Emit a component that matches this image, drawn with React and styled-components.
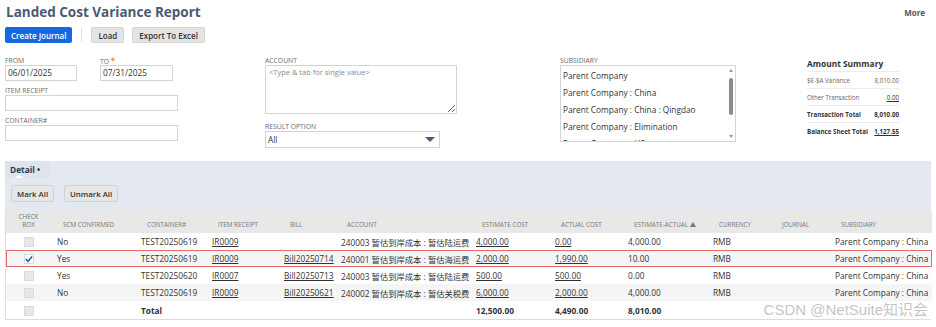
import styled, { createGlobalStyle } from "styled-components";

const GlobalStyle = createGlobalStyle`
  html, body {
    margin: 0;
    padding: 0;
    background: #fff;
  }
  body {
    font-family: "Open Sans", "Noto Sans CJK SC", sans-serif;
    color: #333;
  }
`;

const rows = [
  { checked: false, scm: "No", container: "TEST20250619", receipt: "IR0009", bill: "", account: "240003 暂估到岸成本 : 暂估陆运费", est: "4,000.00", act: "0.00", diff: "4,000.00" },
  { checked: true, scm: "Yes", container: "TEST20250619", receipt: "IR0009", bill: "Bill20250714", account: "240001 暂估到岸成本 : 暂估海运费", est: "2,000.00", act: "1,990.00", diff: "10.00" },
  { checked: false, scm: "Yes", container: "TEST20250620", receipt: "IR0007", bill: "Bill20250713", account: "240003 暂估到岸成本 : 暂估陆运费", est: "500.00", act: "500.00", diff: "0.00" },
  { checked: false, scm: "No", container: "TEST20250619", receipt: "IR0009", bill: "Bill20250621", account: "240002 暂估到岸成本 : 暂估关税费", est: "6,000.00", act: "2,000.00", diff: "4,000.00" },
];

const columns = [
  { label: "CHECK BOX", width: 45 },
  { label: "SCM CONFIRMED", width: 84 },
  { label: "CONTAINER#", width: 71 },
  { label: "ITEM RECEIPT", width: 72 },
  { label: "BILL", width: 57 },
  { label: "ACCOUNT", width: 135 },
  { label: "ESTIMATE COST", width: 79 },
  { label: "ACTUAL COST", width: 73 },
  { label: "ESTIMATE-ACTUAL ▲", width: 85 },
  { label: "CURRENCY", width: 63 },
  { label: "JOURNAL", width: 59 },
  { label: "SUBSIDIARY", width: 103 },
];

const subsidiaries = [
  "Parent Company",
  "Parent Company : China",
  "Parent Company : China : Qingdao",
  "Parent Company : Elimination",
  "Parent Company : US",
];

const Check = () => (
  <svg width="9" height="8" viewBox="0 0 9 8">
    <path d="M1 4.2 L3.4 6.6 L8 1.2" fill="none" stroke="#2660b8" strokeWidth="1.8" />
  </svg>
);

const App = () => {
  return (
    <>
      <GlobalStyle />
      <Page>
        <TitleBar>
          <Title>Landed Cost Variance Report</Title>
          <More>More</More>
        </TitleBar>
        <ButtonBar>
          <PrimaryButton>Create Journal</PrimaryButton>
          <Divider />
          <GreyButton>Load</GreyButton>
          <GreyButton>Export To Excel</GreyButton>
        </ButtonBar>

        <FormGrid>
          <FieldColumn>
            <DateRow>
              <Field>
                <Label>FROM</Label>
                <Input width={72}>06/01/2025</Input>
              </Field>
              <Field>
                <Label>
                  TO <Star>*</Star>
                </Label>
                <Input width={73}>07/31/2025</Input>
              </Field>
            </DateRow>
            <Field>
              <Label>ITEM RECEIPT</Label>
              <Input width={173} />
            </Field>
            <Field>
              <Label>CONTAINER#</Label>
              <Input width={173} />
            </Field>
          </FieldColumn>

          <FieldColumn>
            <Field>
              <Label>ACCOUNT</Label>
              <TextArea readOnly placeholder="<Type & tab for single value>" />
            </Field>
            <Field $top={3}>
              <Label>RESULT OPTION</Label>
              <Select>
                All
                <Caret />
              </Select>
            </Field>
          </FieldColumn>

          <FieldColumn>
            <Field>
              <Label>SUBSIDIARY</Label>
              <ListBox>
                <ListItems>
                  {subsidiaries.map((s) => (
                    <ListItem key={s}>{s}</ListItem>
                  ))}
                </ListItems>
                <ScrollTrack>
                  <ArrowUp />
                  <Thumb />
                  <ArrowDown />
                </ScrollTrack>
              </ListBox>
            </Field>
          </FieldColumn>

          <Summary>
            <SummaryTitle>Amount Summary</SummaryTitle>
            <SummaryRow>
              <span>$E-$A Variance</span>
              <span>8,010.00</span>
            </SummaryRow>
            <SummaryRow>
              <span>Other Transaction</span>
              <LinkValue>0.00</LinkValue>
            </SummaryRow>
            <SummaryRow $bold>
              <span>Transaction Total</span>
              <span>8,010.00</span>
            </SummaryRow>
            <SummaryRow $bold>
              <span>Balance Sheet Total</span>
              <LinkValue>1,127.55</LinkValue>
            </SummaryRow>
          </Summary>
        </FormGrid>

        <DetailSection>
          <TabStrip>
            <Tab>Detail •</Tab>
          </TabStrip>
          <DetailButtons>
            <SmallButton>Mark All</SmallButton>
            <SmallButton>Unmark All</SmallButton>
          </DetailButtons>
          <TableWrap>
            <Table>
              <colgroup>
                {columns.map((c) => (
                  <col key={c.label} style={{ width: c.width }} />
                ))}
              </colgroup>
              <thead>
                <tr>
                  {columns.map((c, i) => (
                    <Th key={c.label} $center={i === 0}>
                      {i === 0 ? (
                        <>
                          CHECK
                          <br />
                          BOX
                        </>
                      ) : (
                        c.label
                      )}
                    </Th>
                  ))}
                </tr>
              </thead>
              <tbody>
                {rows.map((r, i) => (
                  <Row key={i} $alt={i % 2 === 1} $marked={r.checked}>
                    <Td $center>
                      <Box $checked={r.checked}>{r.checked && <Check />}</Box>
                    </Td>
                    <Td>{r.scm}</Td>
                    <Td>{r.container}</Td>
                    <Td>
                      <Link>{r.receipt}</Link>
                    </Td>
                    <Td>
                      <Link>{r.bill}</Link>
                    </Td>
                    <Td>{r.account}</Td>
                    <Td>
                      <Link>{r.est}</Link>
                    </Td>
                    <Td>
                      <Link>{r.act}</Link>
                    </Td>
                    <Td>{r.diff}</Td>
                    <Td>RMB</Td>
                    <Td></Td>
                    <Td>Parent Company : China</Td>
                  </Row>
                ))}
                <Row $total>
                  <Td $center>
                    <Box />
                  </Td>
                  <Td></Td>
                  <Td $bold>Total</Td>
                  <Td></Td>
                  <Td></Td>
                  <Td></Td>
                  <Td $bold>12,500.00</Td>
                  <Td $bold>4,490.00</Td>
                  <Td $bold>8,010.00</Td>
                  <Td></Td>
                  <Td></Td>
                  <Td></Td>
                </Row>
              </tbody>
            </Table>
            <Watermark>CSDN @NetSuite知识会</Watermark>
          </TableWrap>
        </DetailSection>
      </Page>
    </>
  );
};

const Page = styled.div`
  width: 936px;
  height: 327px;
  box-sizing: border-box;
  padding: 0 5px;
  overflow: hidden;
`;

const TitleBar = styled.div`
  display: flex;
  justify-content: space-between;
  align-items: center;
  height: 24px;
  padding-left: 1px;
`;

const Title = styled.h1`
  margin: 0;
  font-size: 13.5px;
  font-weight: 700;
  color: #4b5a72;
`;

const More = styled.div`
  font-size: 8px;
  font-weight: 700;
  color: #555;
  padding-right: 6px;
  margin-top: 1px;
`;

const ButtonBar = styled.div`
  display: flex;
  align-items: center;
  gap: 8px;
  margin-top: 3px;
  height: 16px;
`;

const PrimaryButton = styled.div`
  height: 16px;
  padding: 0 6px;
  display: flex;
  align-items: center;
  background: #1567e2;
  border-radius: 2px;
  color: #fff;
  font-size: 8px;
  font-weight: 600;
`;

const Divider = styled.div`
  width: 1px;
  height: 14px;
  background: #ddd;
  margin: 0 1px;
`;

const GreyButton = styled.div`
  height: 16px;
  padding: 0 6px;
  display: flex;
  align-items: center;
  background: #e4e4e4;
  border: 1px solid #d6d6d6;
  box-sizing: border-box;
  border-radius: 2px;
  color: #333;
  font-size: 8px;
  font-weight: 600;
`;

const FormGrid = styled.div`
  display: grid;
  grid-template-columns: 260px 295px 247px 1fr;
  margin-top: 13px;
  height: 105px;
`;

const FieldColumn = styled.div`
  display: flex;
  flex-direction: column;
  gap: 5px;
`;

const DateRow = styled.div`
  display: flex;
  gap: 23px;
`;

const Field = styled.div`
  display: flex;
  flex-direction: column;
  margin-top: ${(p) => p.$top || 0}px;
`;

const Label = styled.div`
  font-size: 6.8px;
  color: #6b6b6b;
  line-height: 9px;
  height: 9px;
`;

const Star = styled.span`
  color: #e69a1a;
  font-size: 8px;
  font-weight: 700;
`;

const Input = styled.div`
  width: ${(p) => p.width}px;
  height: 16px;
  box-sizing: border-box;
  border: 1px solid #d4d4d4;
  padding: 0 2px;
  font-size: 8.3px;
  line-height: 14px;
  color: #333;
`;

const TextArea = styled.textarea`
  width: 192px;
  height: 49px;
  box-sizing: border-box;
  border: 1px solid #d4d4d4;
  padding: 1px 3px;
  margin: 0;
  font-family: "Open Sans", sans-serif;
  font-size: 7.5px;
  color: #333;
  outline: none;
  &::placeholder {
    color: #8a8a8a;
  }
`;

const Select = styled.div`
  width: 175px;
  height: 17px;
  box-sizing: border-box;
  border: 1px solid #d4d4d4;
  padding: 0 4px 0 2px;
  display: flex;
  align-items: center;
  justify-content: space-between;
  font-size: 8.3px;
  color: #333;
`;

const Caret = styled.span`
  width: 0;
  height: 0;
  border-left: 5px solid transparent;
  border-right: 5px solid transparent;
  border-top: 5px solid #4b5a72;
`;

const ListBox = styled.div`
  width: 176px;
  height: 77px;
  box-sizing: border-box;
  border: 1px solid #d4d4d4;
  display: flex;
  overflow: hidden;
`;

const ListItems = styled.div`
  flex: 1;
  padding: 1px 0 0 2px;
`;

const ListItem = styled.div`
  height: 17px;
  line-height: 17px;
  font-size: 8.3px;
  color: #333;
  white-space: nowrap;
`;

const ScrollTrack = styled.div`
  width: 9px;
  display: flex;
  flex-direction: column;
  align-items: center;
  padding: 3px 0;
  box-sizing: border-box;
`;

const ArrowUp = styled.span`
  width: 0;
  height: 0;
  border-left: 2.5px solid transparent;
  border-right: 2.5px solid transparent;
  border-bottom: 3px solid #999;
`;

const ArrowDown = styled.span`
  width: 0;
  height: 0;
  margin-top: auto;
  border-left: 2.5px solid transparent;
  border-right: 2.5px solid transparent;
  border-top: 3px solid #999;
`;

const Thumb = styled.span`
  width: 4px;
  height: 37px;
  margin-top: 6px;
  border-radius: 2px;
  background: #8c8c8c;
`;

const Summary = styled.div`
  padding-top: 2px;
  width: 92px;
`;

const SummaryTitle = styled.div`
  font-size: 8.4px;
  font-weight: 700;
  color: #333;
  height: 12px;
  margin-bottom: 1px;
`;

const SummaryRow = styled.div`
  display: flex;
  justify-content: space-between;
  align-items: center;
  height: 17px;
  border-top: 1px solid #ececec;
  box-sizing: border-box;
  font-size: 6.2px;
  font-weight: ${(p) => (p.$bold ? 700 : 400)};
  color: ${(p) => (p.$bold ? "#333" : "#666")};
  white-space: nowrap;
`;

const LinkValue = styled.span`
  text-decoration: underline;
  color: #333;
`;

const DetailSection = styled.div`
  background: #e4e9f1;
`;

const TabStrip = styled.div`
  display: flex;
  height: 17px;
`;

const Tab = styled.div`
  position: relative;
  width: 45px;
  box-sizing: border-box;
  padding: 3px 0 0 5px;
  background: #dfe4ec;
  font-size: 8.3px;
  font-weight: 700;
  color: #2c3a50;
  &::after {
    content: "";
    position: absolute;
    left: 9px;
    bottom: 0;
    border-left: 5px solid transparent;
    border-right: 5px solid transparent;
    border-bottom: 3px solid #fff;
  }
`;

const DetailButtons = styled.div`
  display: flex;
  gap: 10px;
  padding: 7px 0 8px 6px;
`;

const SmallButton = styled.div`
  height: 17px;
  padding: 0 5px;
  display: flex;
  align-items: center;
  box-sizing: border-box;
  background: #e6e6e6;
  border: 1px solid #d2d2d2;
  border-radius: 2px;
  font-size: 7.8px;
  font-weight: 600;
  color: #333;
`;

const TableWrap = styled.div`
  position: relative;
  background: #fff;
  border: 1px solid #ddd;
  border-top: none;
`;

const Table = styled.table`
  width: 926px;
  table-layout: fixed;
  border-collapse: collapse;
  font-size: 8.3px;
  color: #333;
`;

const Th = styled.th`
  height: 19px;
  padding: 0 0 4px ${(p) => (p.$center ? 0 : 12)}px;
  background: #e8e8e8;
  font-size: 6.3px;
  font-weight: 400;
  color: #777;
  text-align: ${(p) => (p.$center ? "center" : "left")};
  vertical-align: bottom;
  line-height: 8px;
  white-space: nowrap;
`;

const Row = styled.tr`
  height: ${(p) => (p.$total ? 18 : 17)}px;
  background: ${(p) => (p.$alt ? "#f5f5f5" : "#fff")};
  outline: ${(p) => (p.$marked ? "1.5px solid #e06a6a" : "none")};
  outline-offset: -1px;
`;

const Td = styled.td`
  padding: 0 0 0 ${(p) => (p.$center ? 0 : 6)}px;
  text-align: ${(p) => (p.$center ? "center" : "left")};
  font-weight: ${(p) => (p.$bold ? 700 : 400)};
  white-space: nowrap;
  overflow: hidden;
`;

const Box = styled.span`
  display: inline-flex;
  align-items: center;
  justify-content: center;
  width: 10px;
  height: 10px;
  vertical-align: middle;
  box-sizing: border-box;
  background: ${(p) => (p.$checked ? "#fff" : "#e8e8e8")};
  border: 1px solid #dadada;
`;

const Link = styled.span`
  text-decoration: underline;
  color: #333;
`;

const Watermark = styled.div`
  position: absolute;
  right: 2px;
  bottom: 0;
  font-family: "Liberation Sans", "Noto Sans CJK SC", sans-serif;
  font-size: 15px;
  color: rgba(170, 170, 170, 0.7);
  pointer-events: none;
`;

export default App;
